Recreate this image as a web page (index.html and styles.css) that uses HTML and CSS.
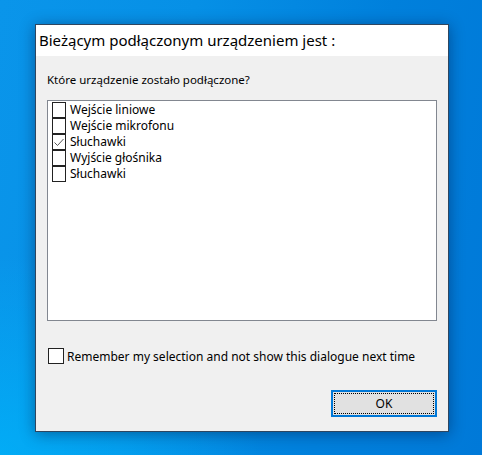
FILE: index.html
```html
<!DOCTYPE html>
<html lang="pl">
<head>
<meta charset="utf-8">
<link rel="stylesheet" href="styles.css">
</head>
<body>
<div class="dialog">
  <div class="titlebar">Bieżącym podłączonym urządzeniem jest :</div>
  <div class="content">
    <div class="prompt">Które urządzenie zostało podłączone?</div>
    <div class="listbox">
      <div class="item"><span class="box"></span><span class="label">Wejście liniowe</span></div>
      <div class="item"><span class="box"></span><span class="label">Wejście mikrofonu</span></div>
      <div class="item"><span class="box checked"><svg viewBox="0 0 14 16" width="14" height="16"><path d="M2.5 8.5 L5.5 11.5 L11.5 5" fill="none" stroke="#555" stroke-width="1"/></svg></span><span class="label">Słuchawki</span></div>
      <div class="item"><span class="box"></span><span class="label">Wyjście głośnika</span></div>
      <div class="item"><span class="box"></span><span class="label">Słuchawki</span></div>
    </div>
    <div class="remember"><span class="cb"></span><span class="rtext">Remember my selection and not show this dialogue next time</span></div>
    <div class="actions"><button class="ok"><span class="focus">OK</span></button></div>
  </div>
</div>
</body>
</html>
```
FILE: styles.css
```css
html, body { margin: 0; padding: 0; }
body {
  width: 482px; height: 455px; overflow: hidden;
  background:
    radial-gradient(ellipse 260px 200px at 0% 100%, rgba(0, 180, 250, 0.75), rgba(0, 180, 250, 0) 100%),
    linear-gradient(100deg, #0a95ea 0%, #0690e6 35%, #0080dc 70%, #0079d8 100%);
  font-family: "Noto Sans", "Open Sans", sans-serif;
  color: #000;
}
.dialog {
  margin: 24px 0 0 35px;
  width: 412px; height: 406px;
  border: 1px solid #2e4660;
  background: #f0f0f0;
  box-shadow: 0 2px 14px rgba(0, 20, 60, 0.45);
  display: flex; flex-direction: column;
}
.titlebar {
  height: 31px; background: #fff;
  font-size: 15px; line-height: 31px;
  padding-left: 3px;
  white-space: nowrap;
}
.content { flex: 1; padding: 0 11px; display: flex; flex-direction: column; }
.prompt { font-size: 11.5px; line-height: 16px; margin-top: 16px; }
.listbox {
  margin-top: 12px; height: 218px;
  border: 1px solid #828790; background: #fff;
  padding: 1px 0 0 4px;
}
.item { display: flex; align-items: center; height: 16px; font-size: 12px; }
.box {
  width: 14px; height: 16px; box-sizing: border-box;
  border: 1px solid #222; margin-top: -1px; margin-right: 4px; flex: none; display: block;
}
.item:first-child .box { margin-top: 0; }
.box svg { display: block; margin: -1px; }
.label { line-height: 16px; }
.remember { display: flex; align-items: center; margin-top: 27px; font-size: 12px; height: 16px; }
.cb { width: 16px; height: 16px; box-sizing: border-box; border: 1px solid #222; background: #fff; margin-left: 1px; margin-right: 3px; }
.actions { display: flex; justify-content: flex-end; margin-top: 26px; }
.ok {
  width: 106px; height: 27px; box-sizing: border-box;
  border: 2px solid #0078d7; background: #e1e1e1; padding: 1px;
  font-family: inherit; font-size: 12px; color: #000; margin: 0;
}
.focus { display: flex; align-items: center; justify-content: center; height: 100%; border: 1px dotted #000; box-sizing: border-box; }
```
